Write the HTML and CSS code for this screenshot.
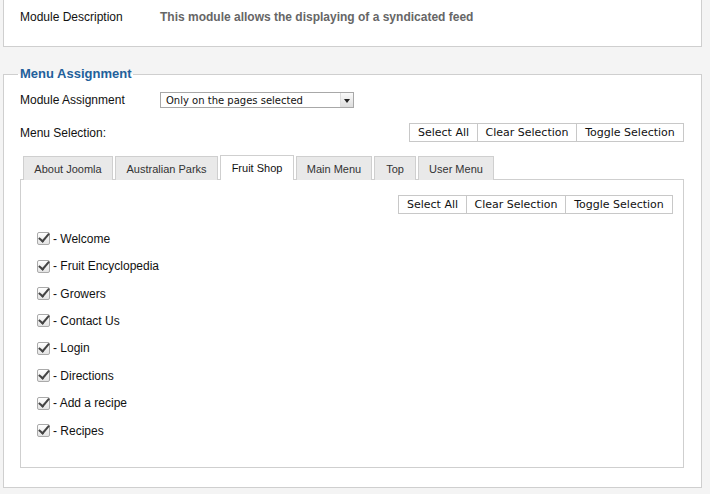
FILE: index.html
```html
<!DOCTYPE html>
<html lang="en">
<head>
    <meta charset="UTF-8">
    <title>Module: Feed Display</title>
    <link rel="stylesheet" href="styles.css">
</head>
<body>
    <div class="panel details">
        <div class="row">
            <span class="label">Module Description</span>
            <span class="desc">This module allows the displaying of a syndicated feed</span>
        </div>
    </div>

    <fieldset class="panel assignment">
        <legend>Menu Assignment</legend>
        <div class="row assign-row">
            <span class="label">Module Assignment</span>
            <div class="select">
                <span>Only on the pages selected</span>
                <span class="select-arrow"></span>
            </div>
        </div>
        <div class="row selection-row">
            <span class="label">Menu Selection:</span>
            <div class="btn-group">
                <button class="btn btn-select">Select All</button>
                <button class="btn btn-clear">Clear Selection</button>
                <button class="btn btn-toggle">Toggle Selection</button>
            </div>
        </div>

        <ul class="tabs">
            <li class="tab t1">About Joomla</li>
            <li class="tab t2">Australian Parks</li>
            <li class="tab t3 active">Fruit Shop</li>
            <li class="tab t4">Main Menu</li>
            <li class="tab t5">Top</li>
            <li class="tab t6">User Menu</li>
        </ul>
        <div class="tab-panel">
            <div class="btn-group inner">
                <button class="btn btn-select">Select All</button>
                <button class="btn btn-clear">Clear Selection</button>
                <button class="btn btn-toggle">Toggle Selection</button>
            </div>
            <ul class="menu-items">
                <li><span class="check"></span> - Welcome</li>
                <li><span class="check"></span> - Fruit Encyclopedia</li>
                <li><span class="check"></span> - Growers</li>
                <li><span class="check"></span> - Contact Us</li>
                <li><span class="check"></span> - Login</li>
                <li><span class="check"></span> - Directions</li>
                <li><span class="check"></span> - Add a recipe</li>
                <li><span class="check"></span> - Recipes</li>
            </ul>
        </div>
    </fieldset>
</body>
</html>
```

FILE: styles.css
```css
body {
    margin: 0;
    background-color: #f4f4f4;
    font-family: "Liberation Sans", Arial, sans-serif;
    font-size: 12px;
    color: #111;
}
.panel {
    background-color: #fff;
    border: 1px solid #cfcfcf;
    margin: 0 8px 0 3px;
    box-sizing: border-box;
}
.details {
    border-top: none;
    height: 47px;
    padding: 10px 16px 0;
}
.row {
    display: flex;
    align-items: center;
}
.label {
    width: 140px;
}
.desc {
    font-weight: bold;
    color: #666;
}

/* menu assignment box */
.assignment {
    margin-top: 19px;
    padding: 0 17px 19px 16px;
}
.assignment legend {
    color: #22609b;
    font-weight: bold;
    font-size: 13px;
    padding: 0 2px;
    margin-left: -2px;
    line-height: 16px;
}
.assign-row {
    margin-top: 9px;
    height: 18px;
}
.select {
    width: 194px;
    height: 16px;
    box-sizing: border-box;
    border: 1px solid #a8a8a8;
    display: flex;
    align-items: center;
    justify-content: space-between;
    padding-left: 5px;
    font-family: "DejaVu Sans", sans-serif;
    font-size: 10px;
}
.select-arrow {
    width: 12px;
    height: 14px;
    border-left: 1px solid #ddd;
    background: linear-gradient(#fafafa, #ddd);
    position: relative;
}
.select-arrow::after {
    content: "";
    position: absolute;
    left: 3px;
    top: 6px;
    border-left: 3px solid transparent;
    border-right: 3px solid transparent;
    border-top: 4px solid #222;
}
.selection-row {
    justify-content: space-between;
    margin-top: 14px;
}
.btn-group {
    display: flex;
}
.btn {
    font-family: "DejaVu Sans", sans-serif;
    font-size: 11px;
    color: #111;
    background-color: #fff;
    border: 1px solid #c8c8c8;
    border-left: none;
    height: 19px;
    padding: 0;
    box-sizing: border-box;
}
.btn:first-child {
    border-left: 1px solid #c8c8c8;
}
.btn-select {
    width: 69px;
}
.btn-clear {
    width: 99px;
}
.btn-toggle {
    width: 107px;
}

/* tabs */
.tabs {
    list-style: none;
    margin: 14px 0 0 3px;
    padding: 0;
    display: flex;
    gap: 2px;
}
.tab {
    height: 24px;
    box-sizing: border-box;
    border: 1px solid #cfcfcf;
    border-bottom: none;
    background-color: #e9e9e9;
    color: #333;
    font-size: 11px;
    display: flex;
    align-items: center;
    justify-content: center;
    margin-bottom: -1px;
    position: relative;
}
.tab.active {
    background-color: #fff;
    height: 25px;
    margin-top: -1px;
    color: #111;
}
.t1 { width: 90px; }
.t2 { width: 103px; }
.t3 { width: 74px; }
.t4 { width: 76px; }
.t5 { width: 42px; }
.t6 { width: 76px; }
.tab-panel {
    border: 1px solid #cfcfcf;
    height: 289px;
    box-sizing: border-box;
    padding: 15px 10px 0 16px;
}
.btn-group.inner {
    justify-content: flex-end;
}
.menu-items {
    list-style: none;
    margin: 11px 0 0;
    padding: 0;
}
.menu-items li {
    height: 27.43px;
    display: flex;
    align-items: center;
}
.check {
    width: 11px;
    height: 11px;
    border: 1px solid #aaa;
    border-radius: 2px;
    background: linear-gradient(#fff, #e4e4e4);
    margin-right: 3px;
    position: relative;
}
.check::after {
    content: "";
    position: absolute;
    left: 3px;
    top: -2px;
    width: 4px;
    height: 9px;
    border-right: 2px solid #444;
    border-bottom: 2px solid #444;
    transform: rotate(40deg);
}
```
